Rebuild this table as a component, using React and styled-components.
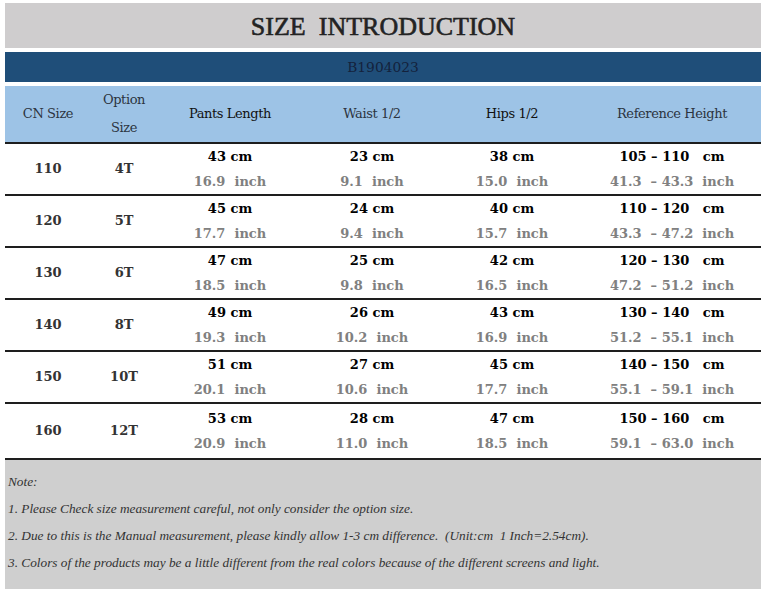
import styled, { createGlobalStyle } from "styled-components";

const rows = [
  ["110", "4T", ["43", "16.9"], ["23", "9.1"], ["38", "15.0"], ["105", "110", "41.3", "43.3"]],
  ["120", "5T", ["45", "17.7"], ["24", "9.4"], ["40", "15.7"], ["110", "120", "43.3", "47.2"]],
  ["130", "6T", ["47", "18.5"], ["25", "9.8"], ["42", "16.5"], ["120", "130", "47.2", "51.2"]],
  ["140", "8T", ["49", "19.3"], ["26", "10.2"], ["43", "16.9"], ["130", "140", "51.2", "55.1"]],
  ["150", "10T", ["51", "20.1"], ["27", "10.6"], ["45", "17.7"], ["140", "150", "55.1", "59.1"]],
  ["160", "12T", ["53", "20.9"], ["28", "11.0"], ["47", "18.5"], ["150", "160", "59.1", "63.0"]],
];

const notes = [
  "1. Please Check size measurement careful, not only consider the option size.",
  "2. Due to this is the Manual measurement, please kindly allow 1-3 cm difference.  (Unit:cm  1 Inch=2.54cm).",
  "3. Colors of the products may be a little different from the real colors because of the different screens and light.",
];

const cols = "86px 66px 146px 138px 142px 178px";

const App = () => {
  return (
    <>
      <Global />
      <Page>
        <TitleBand>SIZE&nbsp;&nbsp;INTRODUCTION</TitleBand>
        <CodeBand>B1904023</CodeBand>
        <HeadRow>
          <HeadCell>CN Size</HeadCell>
          <HeadCell $stack>
            <span>Option</span>
            <span>Size</span>
          </HeadCell>
          <HeadCell $dark>Pants Length</HeadCell>
          <HeadCell>Waist 1/2</HeadCell>
          <HeadCell $dark>Hips 1/2</HeadCell>
          <HeadCell>Reference Height</HeadCell>
        </HeadRow>
        {rows.map((r, i) => (
          <Row key={i} $last={i === rows.length - 1}>
            <SizeCell>{r[0]}</SizeCell>
            <SizeCell>{r[1]}</SizeCell>
            {[r[2], r[3], r[4]].map((m, j) => (
              <Measure key={j}>
                <Cm>{m[0]} cm</Cm>
                <Inch>{m[1]}  inch</Inch>
              </Measure>
            ))}
            <Measure>
              <Cm>{r[5][0]} – {r[5][1]}   cm</Cm>
              <Inch>{r[5][2]}  – {r[5][3]}  inch</Inch>
            </Measure>
          </Row>
        ))}
        <NoteBand>
          <NoteLine>Note:</NoteLine>
          {notes.map((n) => (
            <NoteLine key={n}>{n}</NoteLine>
          ))}
        </NoteBand>
      </Page>
    </>
  );
};

const Global = createGlobalStyle`
  html, body {
    margin: 0;
    padding: 0;
    background: #ffffff;
  }
`;

const Page = styled.div`
  width: 756px;
  padding: 3px 5px 0;
  display: flex;
  flex-direction: column;
`;

const TitleBand = styled.div`
  height: 45px;
  background: #cfcdce;
  display: flex;
  align-items: center;
  justify-content: center;
  font-family: "Liberation Serif", serif;
  font-size: 26px;
  color: #232323;
  -webkit-text-stroke: 0.6px #232323;
  padding-top: 2px;
  box-sizing: border-box;
`;

const CodeBand = styled.div`
  margin-top: 4px;
  height: 30px;
  background: #1f4e79;
  display: flex;
  align-items: center;
  justify-content: center;
  font-family: "DejaVu Serif", serif;
  font-size: 13.8px;
  color: #14223c;
`;

const HeadRow = styled.div`
  margin-top: 4px;
  height: 56px;
  background: #9dc3e6;
  display: grid;
  grid-template-columns: ${cols};
  border-bottom: 2px solid #1e1e1e;
`;

const HeadCell = styled.div`
  display: flex;
  flex-direction: ${(p) => (p.$stack ? "column" : "row")};
  align-items: center;
  justify-content: center;
  line-height: 28px;
  font-family: "DejaVu Serif", serif;
  font-size: 13px;
  letter-spacing: -0.4px;
  color: ${(p) => (p.$dark ? "#111" : "#2c3440")};
`;

const Row = styled.div`
  display: grid;
  grid-template-columns: ${cols};
  height: ${(p) => (p.$last ? "54px" : "50px")};
  border-bottom: 2px solid #1e1e1e;
`;

const SizeCell = styled.div`
  display: flex;
  align-items: center;
  justify-content: center;
  font-family: "DejaVu Serif", serif;
  font-weight: bold;
  font-size: 13px;
  color: #333;
  padding-bottom: 2px;
`;

const Measure = styled.div`
  display: flex;
  flex-direction: column;
  align-items: center;
  justify-content: center;
  gap: 4px;
  font-family: "DejaVu Serif", serif;
  font-weight: bold;
  font-size: 13px;
  white-space: pre;
`;

const Cm = styled.span`
  color: #000;
  line-height: 21px;
`;

const Inch = styled.span`
  color: #808080;
  line-height: 21px;
`;

const NoteBand = styled.div`
  background: #cfcfcf;
  height: 129px;
  padding: 8px 3px 0;
  box-sizing: border-box;
  display: flex;
  flex-direction: column;
`;

const NoteLine = styled.div`
  font-family: "Liberation Serif", serif;
  font-style: italic;
  font-size: 13.3px;
  line-height: 27px;
  color: #333;
  white-space: pre;
`;

export default App;
